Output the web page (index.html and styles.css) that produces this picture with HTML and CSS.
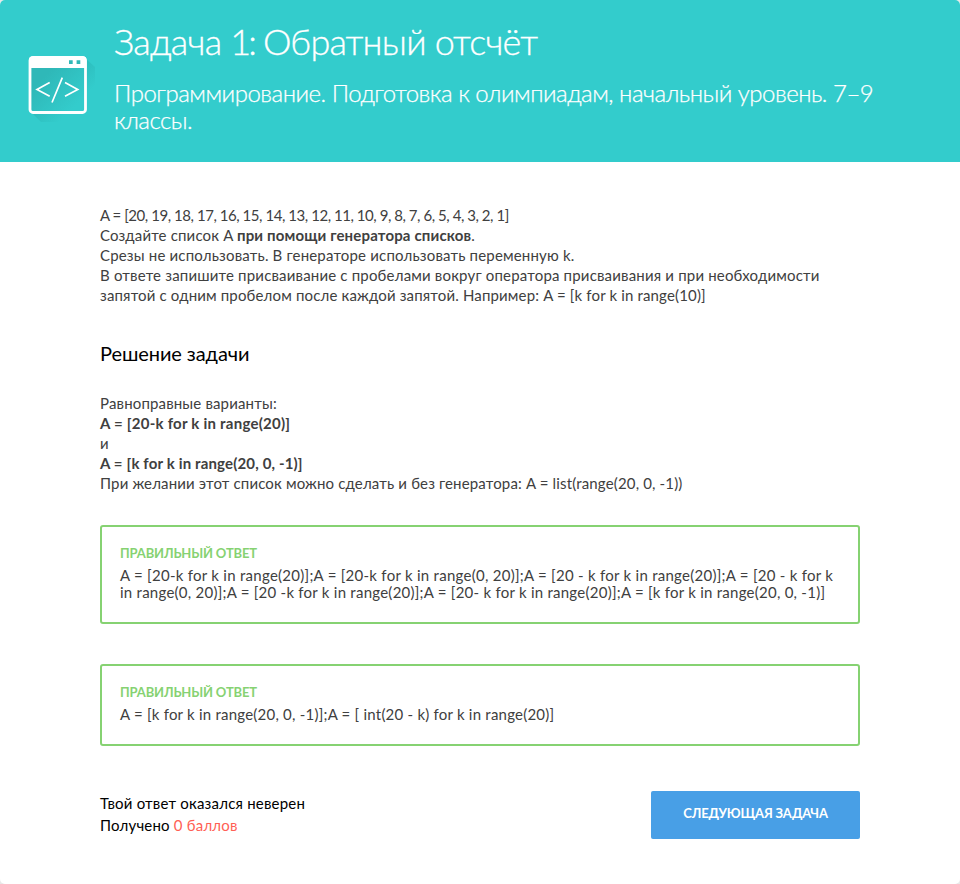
FILE: index.html
```html
<!DOCTYPE html>
<html lang="ru">
<head>
<meta charset="utf-8">
<title>Задача 1: Обратный отсчёт</title>
<link rel="stylesheet" href="styles.css">
</head>
<body>
<main class="task">
<header class="header">
<svg class="icon" width="68" height="68" viewBox="0 0 68 68" fill="none">
<defs>
<linearGradient id="pane" x1="0" y1="0" x2="1" y2="1"><stop offset=".3" stop-color="#2fb8b8"/><stop offset=".85" stop-color="#33cccc"/></linearGradient>
<linearGradient id="shade" x1="0" y1="0" x2="1" y2="1"><stop offset=".35" stop-color="#2bb8b8"/><stop offset=".72" stop-color="#33cccc"/></linearGradient>
</defs>
<path d="M4 57l10 10h54V12L58 3z" fill="url(#shade)"/>
<rect x="3" y="2.500" width="55.500" height="55" rx="3" fill="url(#pane)" stroke="#fff" stroke-width="2.800"/>
<path d="M2 13V4.500a3 3 0 0 1 3-3h51.500a3 3 0 0 1 3 3V13z" fill="#fff"/>
<path d="M42 5.300h3.700V9H42zM49.600 5.300h3.700V9h-3.700z" fill="#2fb8b8"/>
<path d="M22.700 27.500L10 34.500l12.700 6.800M38 27.500l12.700 7L38 41.300M35.300 22.700L25 47.500" stroke="#fff" stroke-width="1.700"/>
</svg>
<div>
<h1 class="title">Задача <span class="number">1:</span> Обратный отсчёт</h1>
<p class="course">Программирование. Подготовка к олимпиадам, начальный уровень. 7–9<br>классы.</p>
</div>
</header>
<div class="content">
<p class="text"><span class="numbers">A = [20, 19, 18, 17, 16, 15, 14, 13, 12, 11, 10, 9, 8, 7, 6, 5, 4, 3, 2, 1]</span><br>
Создайте список A <b>при помощи генератора списков</b>.<br>
<span class="wide">Срезы не использовать. В генераторе использовать переменную k.</span><br>
<span class="wide">В ответе запишите присваивание с пробелами вокруг оператора присваивания и при необходимости</span><br>
запятой с одним пробелом после каждой запятой. Например: A = [k for k in range(10)]</p>
<h2 class="subtitle">Решение задачи</h2>
<p class="text">Равноправные варианты:<br>
<b class="code">A = [20-k for k in range(20)]</b><br>
и<br>
<b>A = [k for k in range(20, 0, -1)]</b><br>
При желании этот список можно сделать и без генератора: A = list(range(20, 0, -1))</p>
<section class="answer"><h3 class="label">ПРАВИЛЬНЫЙ ОТВЕТ</h3>
<p class="value">A = [20-k for k in range(20)];A = [20-k for k in range(0, 20)];A = [20 - k for k in range(20)];A = [20 - k for k<br><span class="tail">in range(0, 20)];A = [20 -k for k in range(20)];A = [20- k for k in range(20)];A = [k for k in range(20, 0, -1)]</span></p></section>
<section class="answer second"><h3 class="label">ПРАВИЛЬНЫЙ ОТВЕТ</h3>
<p class="value short">A = [k for k in range(20, 0, -1)];A = [ int(20 - k) for k in range(20)]</p></section>
<footer class="footer">
<p class="result">Твой ответ оказался неверен<br>Получено <em>0 баллов</em></p>
<button class="next">СЛЕДУЮЩАЯ ЗАДАЧА</button>
</footer>
</div>
</main>
</body>
</html>
```
FILE: styles.css
```css
*{box-sizing:border-box}
body{margin:0;background:#e8e8e8;font-family:Lato,"Noto Sans",sans-serif;color:#404040}
h1,h2,h3,p{margin:0;font-weight:400;white-space:nowrap}
.task{height:884px;background:#fff;border-radius:5px;overflow:hidden}
.header{height:162px;background:#3cc;color:#fff;display:flex;padding:18px 27px}
.icon{flex:none;margin:37px 19px 0 0}
.title{font-size:36px;line-height:46px;font-weight:300;letter-spacing:-.77px;-webkit-text-stroke:.3px #fff}
.number{letter-spacing:-3px}
.course{font-size:24px;line-height:27px;font-weight:300;margin-top:15px;letter-spacing:-.5px;-webkit-text-stroke:.25px #fff}
.content{padding:43px 100px 0}
.text{font-size:15px;line-height:20px;letter-spacing:.155px}
.numbers{letter-spacing:-.45px}
.wide{letter-spacing:.18px}
.code{letter-spacing:.24px}
.subtitle{font-size:20px;line-height:28px;color:#000;margin:34px 0 26px;letter-spacing:-.08px}
.answer{margin-top:32px;height:99px;border:2px solid #86d272;border-radius:3px;padding:18px}
.second{height:82px;margin-top:40px}
.label{font-size:13px;line-height:17px;font-weight:700;color:#86d272;letter-spacing:-.15px}
.value{font-size:15px;line-height:17px;margin-top:5px;letter-spacing:.27px}
.tail{letter-spacing:.25px}
.short{letter-spacing:.225px}
.footer{display:flex;justify-content:space-between;margin-top:45px}
.result{font-size:15px;line-height:22px;color:#000;padding-top:1px;letter-spacing:.2px}
.result em{font-style:normal;color:#ff5f55}
.next{width:209px;height:48px;border:0;border-radius:2px;background:#489fe6;color:#fff;font:700 13px Lato,sans-serif;padding:0 0 4px;letter-spacing:-.18px}
```
